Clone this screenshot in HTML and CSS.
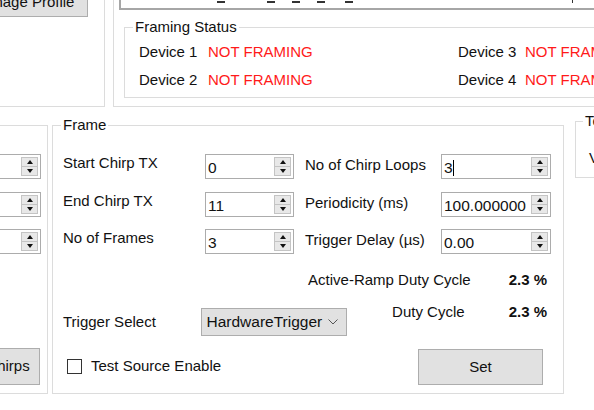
FILE: index.html
```html
<!DOCTYPE html>
<html lang="en">
<head>
    <meta charset="UTF-8">
    <meta name="viewport" content="width=device-width, initial-scale=1.0">
    <title>Frame Configuration</title>
    <link rel="stylesheet" href="styles.css">
</head>
<body>
    <div class="top">
        <div class="profile-panel">
            <button class="btn profile-btn">Manage Profile</button>
        </div>
        <div class="status-panel">
            <div class="sensor-box">
                <div class="ticks">
                    <span class="t1"></span><span class="t2"></span><span class="t3"></span><span class="t3"></span><span class="t4"></span><span class="tick"></span>
                </div>
            </div>
            <fieldset class="group framing">
                <legend>Framing Status</legend>
                <div class="devices">
                    <span>Device 1</span><span class="bad">NOT FRAMING</span>
                    <span>Device 3</span><span class="bad">NOT FRAMING</span>
                    <span>Device 2</span><span class="bad">NOT FRAMING</span>
                    <span>Device 4</span><span class="bad">NOT FRAMING</span>
                </div>
            </fieldset>
        </div>
    </div>

    <div class="bottom">
        <div class="chirp-panel">
            <div class="spin small"><span class="spin-val">0</span><span class="spin-btns"><i class="up"></i><i class="down"></i></span></div>
            <div class="spin small"><span class="spin-val">0</span><span class="spin-btns"><i class="up"></i><i class="down"></i></span></div>
            <div class="spin small"><span class="spin-val">0</span><span class="spin-btns"><i class="up"></i><i class="down"></i></span></div>
            <button class="btn chirps-btn">Chirps</button>
        </div>

        <fieldset class="group frame">
            <legend>Frame</legend>
            <div class="frame-grid">
                <span class="lbl">Start Chirp TX</span>
                <div class="spin"><span class="spin-val">0</span><span class="spin-btns"><i class="up"></i><i class="down"></i></span></div>
                <span class="lbl right">No of Chirp Loops</span>
                <div class="spin"><span class="spin-val">3<span class="caret"></span></span><span class="spin-btns"><i class="up"></i><i class="down"></i></span></div>

                <span class="lbl">End Chirp TX</span>
                <div class="spin"><span class="spin-val">11</span><span class="spin-btns"><i class="up"></i><i class="down"></i></span></div>
                <span class="lbl right">Periodicity (ms)</span>
                <div class="spin"><span class="spin-val">100.000000</span><span class="spin-btns"><i class="up"></i><i class="down"></i></span></div>

                <span class="lbl">No of Frames</span>
                <div class="spin"><span class="spin-val">3</span><span class="spin-btns"><i class="up"></i><i class="down"></i></span></div>
                <span class="lbl right">Trigger Delay (µs)</span>
                <div class="spin"><span class="spin-val">0.00</span><span class="spin-btns"><i class="up"></i><i class="down"></i></span></div>
            </div>

            <div class="frame-lower">
                <div class="trigger-col">
                    <div class="trigger-row">
                        <span class="trigger-lbl">Trigger Select</span>
                        <div class="combo">
                            <span>HardwareTrigger</span>
                            <svg width="10" height="6" viewBox="0 0 10 6"><polyline points="0.5,0.5 5,5 9.5,0.5" fill="none" stroke="#555" stroke-width="1"/></svg>
                        </div>
                    </div>
                    <label class="check"><span class="check-box"></span>Test Source Enable</label>
                </div>
                <div class="duty-col">
                    <div class="duty-row"><span>Active-Ramp Duty Cycle</span><b class="duty-val first">2.3 %</b></div>
                    <div class="duty-row"><span>Duty Cycle</span><b class="duty-val">2.3 %</b></div>
                    <button class="btn set-btn">Set</button>
                </div>
            </div>
        </fieldset>

        <fieldset class="group temp">
            <legend>Temperature</legend>
            <div class="temp-row">Voltage</div>
        </fieldset>
    </div>
</body>
</html>
```

FILE: styles.css
```css
body {
    margin: 0;
    width: 594px;
    height: 410px;
    overflow: hidden;
    background: #ffffff;
    color: #111111;
    font-family: "Liberation Sans", Arial, sans-serif;
    font-size: 15px;
    line-height: 18px;
}
.btn {
    background: #e1e1e1;
    border: 1px solid #adadad;
    font: inherit;
    color: #111111;
    padding: 0;
    box-sizing: border-box;
    white-space: nowrap;
}
.group {
    margin: 0;
    padding: 0;
    min-width: 0;
    border: 1px solid #dcdcdc;
    box-sizing: border-box;
}
.group legend {
    padding: 0 2px;
    margin-left: 8px;
    line-height: 16px;
}

/* top strip */
.top {
    display: flex;
    margin-left: -100px;
    height: 107px;
}
.profile-panel {
    width: 205px;
    flex-shrink: 0;
    box-sizing: border-box;
    border-right: 1px solid #dcdcdc;
    border-bottom: 1px solid #dcdcdc;
}
.profile-btn {
    display: block;
    margin: -13px 0 0 60px;
    width: 128px;
    height: 30px;
}
.status-panel {
    flex: 1;
    min-width: 0;
    margin-left: 8px;
    border-left: 1px solid #dcdcdc;
    border-bottom: 1px solid #dcdcdc;
}
.sensor-box {
    margin: -30px 0 0 5px;
    height: 40px;
    width: 800px;
    box-sizing: border-box;
    border: 2px solid #a6a6a6;
    border-right: none;
}
.ticks {
    display: flex;
    align-items: flex-end;
    height: 100%;
    padding-bottom: 5px;
    box-sizing: border-box;
}
.ticks span {
    width: 8px;
    height: 2px;
    background: #333333;
}
.ticks .t1 { margin-left: 96px; }
.ticks .t2 { margin-left: 42px; }
.ticks .t3 { margin-left: 17px; }
.ticks .t4 { margin-left: 20px; }
.ticks .tick {
    width: 1px;
    height: 4px;
    margin-left: 219px;
}
.framing {
    margin: 9px 0 0 10px;
    width: 700px;
    height: 79px;
}
.devices {
    display: grid;
    grid-template-columns: 69px 250px 67px auto;
    row-gap: 10px;
    padding: 8px 0 0 14px;
    white-space: nowrap;
}
.bad {
    color: #ff1a1a;
}

/* bottom strip */
.bottom {
    display: flex;
    align-items: flex-start;
    margin: 10px 0 0 -100px;
}
.chirp-panel {
    width: 148px;
    height: 269px;
    flex-shrink: 0;
    margin-top: 8px;
    box-sizing: border-box;
    border: 1px solid #dcdcdc;
    border-left: none;
    padding: 28px 6px 0 0;
    display: flex;
    flex-direction: column;
    align-items: flex-end;
    gap: 12.5px;
}
.chirps-btn {
    width: 64px;
    height: 37px;
    margin: 81px 1px 0 0;
}
.frame {
    margin-left: 4px;
    width: 512px;
    height: 277px;
    flex-shrink: 0;
}
.frame-grid {
    display: grid;
    grid-template-columns: 142px 89px 147px 110px;
    grid-auto-rows: 25px;
    row-gap: 12.5px;
    padding: 21px 0 0 10px;
}
.lbl {
    white-space: nowrap;
}
.lbl.right {
    padding-left: 11px;
    margin-top: 2px;
}
.spin {
    display: flex;
    height: 25px;
    box-sizing: border-box;
    border: 1px solid #acacac;
    background: #ffffff;
}
.spin.small {
    width: 100px;
    flex-shrink: 0;
}
.spin-val {
    flex: 1;
    min-width: 0;
    padding: 4px 0 0 2px;
    font-size: 15.5px;
    white-space: nowrap;
    overflow: hidden;
}
.caret {
    display: inline-block;
    width: 1px;
    height: 16px;
    background: #000000;
    vertical-align: -3px;
}
.spin-btns {
    width: 17px;
    margin: 2px 2px 2px 0;
    display: flex;
    flex-direction: column;
    border: 1px solid #c4c4c4;
    background: #e8e8e8;
    box-sizing: border-box;
}
.spin-btns i {
    flex: 1;
    display: flex;
    align-items: center;
    justify-content: center;
}
.spin-btns i.down {
    border-top: 1px solid #c4c4c4;
}
.spin-btns i::after {
    content: "";
    border-left: 3.5px solid transparent;
    border-right: 3.5px solid transparent;
}
.spin-btns i.up::after {
    border-bottom: 4px solid #111111;
}
.spin-btns i.down::after {
    border-top: 4px solid #111111;
}

.frame-lower {
    display: flex;
    margin-top: 17px;
    padding-left: 10px;
}
.trigger-col {
    width: 284px;
    padding-top: 37px;
}
.trigger-row {
    display: flex;
    align-items: center;
}
.trigger-lbl {
    width: 139px;
}
.combo {
    width: 146px;
    height: 28px;
    box-sizing: border-box;
    border: 1px solid #adadad;
    background: #e1e1e1;
    display: flex;
    align-items: center;
    justify-content: space-between;
    padding: 0 8px 0 4px;
    font-size: 15.5px;
}
.check {
    display: flex;
    align-items: center;
    gap: 9px;
    margin: 21px 0 0 4px;
}
.check-box {
    width: 15px;
    height: 15px;
    box-sizing: border-box;
    border: 1px solid #333333;
    background: #ffffff;
}
.duty-col {
    width: 203px;
    display: flex;
    flex-direction: column;
    align-items: flex-end;
}
.duty-row {
    display: flex;
    white-space: nowrap;
    padding-right: 3px;
}
.duty-row + .duty-row {
    margin-top: 14px;
}
.duty-val {
    margin-left: 44px;
}
.duty-val.first {
    margin-left: 38px;
}
.set-btn {
    width: 125px;
    height: 36px;
    margin: 28px 7px 0 0;
}
.temp {
    margin: -4px 0 0 11px;
    width: 200px;
    height: 65px;
    flex-shrink: 0;
}
.temp legend {
    margin-left: 7px;
}
.temp-row {
    padding: 20px 0 0 13px;
}
```
